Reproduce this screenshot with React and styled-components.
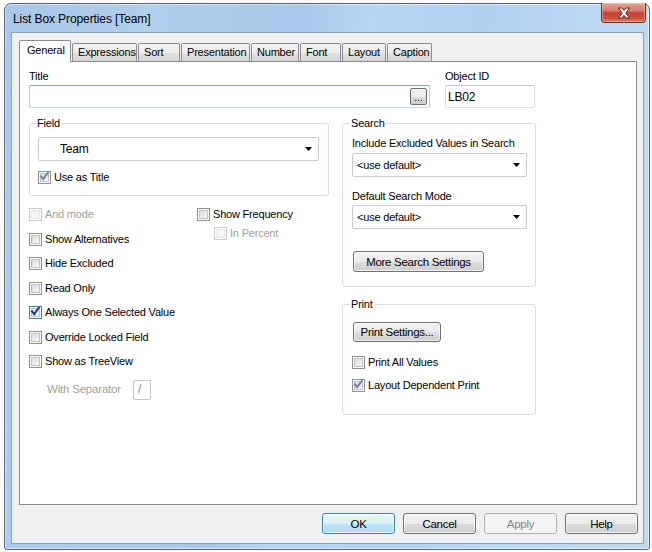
import React from "react";
import styled, { createGlobalStyle, css } from "styled-components";

const Global = createGlobalStyle`
  html, body { margin: 0; padding: 0; background: #ffffff; }
  body {
    font-family: "Liberation Sans", Arial, sans-serif;
    font-size: 11px;
    letter-spacing: -0.2px;
    color: #000;
  }
  * { box-sizing: border-box; }
  fieldset { min-width: 0; }
`;

const Screen = styled.div`
  width: 652px;
  height: 552px;
  padding: 3px 0 0 4px;
  background: #ffffff;
  overflow: hidden;
`;

const Window = styled.div`
  width: 646px;
  height: 547px;
  border: 1px solid #5a6470;
  border-radius: 7px 7px 3px 3px;
  background: linear-gradient(
    100deg,
    #a9c8e9 0%,
    #b0cfef 20%,
    #a8c9eb 40%,
    #b6d6f5 50%,
    #b0d0f0 65%,
    #bcd9f5 80%,
    #c2d8ee 100%
  );
  box-shadow: inset 0 0 0 1px rgba(255, 255, 255, 0.5);
  display: flex;
  flex-direction: column;
`;

const TitleBar = styled.div`
  height: 28px;
  display: flex;
  align-items: center;
  padding-left: 8px;
`;

const TitleText = styled.div`
  flex: 1;
  font-size: 12px;
  letter-spacing: -0.1px;
  color: #000;
  padding-top: 1px;
`;

const CloseButton = styled.div`
  align-self: flex-start;
  margin-top: -1px;
  margin-right: 3px;
  width: 45px;
  height: 20px;
  border: 1px solid #6b2a22;
  border-top: none;
  border-radius: 0 0 4px 4px;
  background: linear-gradient(
    to bottom,
    #e7a597 0%,
    #d67c6c 40%,
    #c4422f 52%,
    #c9533f 80%,
    #d9806b 100%
  );
  box-shadow: inset 0 0 0 1px rgba(255, 200, 190, 0.5);
  display: flex;
  align-items: center;
  justify-content: center;
`;

const Client = styled.div`
  flex: 1;
  margin: 0 5px 5px 6px;
  border: 1px solid #8aa1bd;
  background: #f0f0f0;
  padding: 7px 6px 0 7px;
  display: flex;
  flex-direction: column;
`;

const TabStrip = styled.div`
  height: 22px;
  display: flex;
  align-items: flex-end;
  gap: 1px;
`;

const Tab = styled.div`
  position: relative;
  width: ${(p) => p.$w}px;
  border: 1px solid #898c95;
  border-bottom: none;
  border-radius: 2px 2px 0 0;
  white-space: nowrap;
  ${(p) =>
    p.$active
      ? css`
          z-index: 1;
          height: 22px;
          background: #ffffff;
          padding: 3px 0 0 7px;
        `
      : css`
          height: 18px;
          margin-bottom: 1px;
          background: linear-gradient(to bottom, #f4f4f4 0%, #ededed 50%, #e2e2e2 51%, #d6d6d6 100%);
          padding: 2px 0 0 5px;
        `}
`;

const Panel = styled.div`
  margin-top: -1px;
  height: 444px;
  border: 1px solid #898c95;
  background: #ffffff;
  padding: 8px 0 0 9px;
  display: flex;
  flex-direction: column;
`;

const Row = styled.div`
  display: flex;
  gap: ${(p) => p.$gap}px;
  margin-top: ${(p) => p.$mt || 0}px;
`;

const Column = styled.div`
  width: ${(p) => p.$w}px;
  display: flex;
  flex-direction: column;
`;

const Label = styled.div`
  line-height: 13px;
  height: 13px;
  white-space: nowrap;
  color: ${(p) => (p.$disabled ? "#a0a0a0" : "#000")};
  margin-top: ${(p) => p.$mt || 0}px;
`;

const TextBox = styled.div`
  margin-top: 2px;
  height: 23px;
  background: #fff;
  border: 1px solid;
  border-color: ${(p) => (p.$focus ? "#7e9fc6 #b7cde4 #c7d9ec #b7cde4" : "#c9c9c9 #dadada #e0e0e0 #dadada")};
  border-radius: 2px;
  display: flex;
  align-items: center;
  justify-content: flex-end;
  padding: 0 2px;
  font-size: 12px;
`;

const IdText = styled.span`
  flex: 1;
`;

const SmallButton = styled.div`
  width: 17px;
  height: 17px;
  border: 1px solid #707070;
  border-radius: 2px;
  background: linear-gradient(to bottom, #f2f2f2 0%, #ebebeb 50%, #dddddd 51%, #cfcfcf 100%);
  font-size: 10px;
  line-height: 17px;
  text-align: center;
  letter-spacing: 0;
`;

const Group = styled.fieldset`
  margin: ${(p) => p.$mt || 0}px 0 0 0;
  border: 1px solid #d5dfe5;
  border-radius: 3px;
  padding: ${(p) => p.$pad};
  display: flex;
  flex-direction: column;
  align-items: flex-start;
`;

const Legend = styled.legend`
  padding: 0 1px;
  margin-left: -2px;
  line-height: 13px;
`;

const Combo = styled.div`
  width: 100%;
  height: ${(p) => p.$h || 24}px;
  margin-top: ${(p) => p.$mt || 0}px;
  border: 1px solid #cbcbcb;
  border-radius: 2px;
  background: #fff;
  display: flex;
  align-items: center;
  padding: 0 6px 0 ${(p) => p.$indent}px;
`;

const ComboText = styled.span`
  flex: 1;
  font-size: ${(p) => p.$fs || 11}px;
`;

const PushButton = styled.div`
  width: ${(p) => p.$w}px;
  height: ${(p) => p.$h || 21}px;
  margin-top: ${(p) => p.$mt || 0}px;
  margin-left: ${(p) => p.$ml || 0}px;
  border: 1px solid #707070;
  border-radius: 3px;
  background: linear-gradient(to bottom, #f2f2f2 0%, #ebebeb 50%, #dddddd 51%, #cfcfcf 100%);
  box-shadow: inset 0 0 0 1px rgba(255, 255, 255, 0.7);
  display: flex;
  align-items: center;
  justify-content: center;
  white-space: nowrap;
  font-size: 11.5px;
  letter-spacing: -0.3px;
  ${(p) =>
    p.$default &&
    css`
      border-color: #3c7fb1;
      background: linear-gradient(to bottom, #eaf6fd 0%, #d9f0fc 50%, #bee6fd 51%, #a7d9f5 100%);
      box-shadow: inset 0 0 0 1px rgba(255, 255, 255, 0.8);
    `}
  ${(p) =>
    p.$disabled &&
    css`
      border-color: #adb2b5;
      background: #f4f4f4;
      box-shadow: none;
      color: #838383;
    `}
`;

const CheckRow = styled.div`
  display: flex;
  align-items: center;
  height: 13px;
  margin-left: ${(p) => p.$ml || 0}px;
  margin-top: ${(p) => p.$mt || 0}px;
`;

const Box = styled.span`
  width: 13px;
  height: 13px;
  flex: none;
  border: 1px solid ${(p) => (p.$disabled ? "#c8c8c8" : p.$hot ? "#3c7fb1" : "#8e8f8f")};
  background: #fff;
  padding: 1px;
  display: flex;
  margin-right: 3px;
`;

const BoxInner = styled.span`
  flex: 1;
  border: 1px solid ${(p) => (p.$disabled ? "#e6e6e6" : "#c2c2c2")};
  background: ${(p) =>
    p.$disabled
      ? "#f4f4f4"
      : p.$hot
      ? "linear-gradient(135deg, #cbe3f5 0%, #eef6fc 100%)"
      : "linear-gradient(135deg, #dcdcdc 0%, #f6f6f6 100%)"};
  position: relative;
`;

const CheckSvg = styled.svg`
  position: absolute;
  left: -2px;
  top: -3px;
`;

const Checkbox = ({ label, checked, disabled, hot, dim, ml, mt }) => (
  <CheckRow $ml={ml} $mt={mt}>
    <Box $disabled={disabled} $hot={hot}>
      <BoxInner $disabled={disabled} $hot={hot}>
        {checked && (
          <CheckSvg width="11" height="11" viewBox="0 0 11 11">
            <path
              d="M2 5.5 L4.2 8.2 L8.8 1.8"
              fill="none"
              stroke={dim ? "#6f82ad" : "#21387a"}
              strokeWidth="2"
              strokeLinecap="square"
            />
          </CheckSvg>
        )}
      </BoxInner>
    </Box>
    <Label $disabled={disabled}>{label}</Label>
  </CheckRow>
);

const Arrow = () => (
  <svg width="7" height="4" viewBox="0 0 7 4">
    <polygon points="0,0 7,0 3.5,4" fill="#000" />
  </svg>
);

const OptionsGrid = styled.div`
  margin-top: 12px;
  display: grid;
  grid-template-columns: 168px 1fr;
`;

const OptionsList = styled.div`
  display: flex;
  flex-direction: column;
  gap: 11.5px;
`;

const SeparatorRow = styled.div`
  display: flex;
  align-items: center;
  height: 20px;
  padding-left: 18px;
`;

const SeparatorLabel = styled(Label)`
  width: 86px;
  font-size: 11.5px;
`;

const SeparatorBox = styled.div`
  width: 18px;
  height: 20px;
  border: 1px solid #c6c6c6;
  border-radius: 2px;
  color: #8a8a8a;
  font-size: 12px;
  padding-left: 4px;
  line-height: 17px;
`;

const ButtonRow = styled.div`
  margin-top: 8px;
  margin-right: -1px;
  display: flex;
  justify-content: flex-end;
  gap: 8px;
`;

const CloseX = () => (
  <svg width="14" height="12" viewBox="0 0 14 12">
    <path
      d="M1.5 1 H5 L7 3.6 L9 1 H12.5 L8.8 6 L12.5 11 H9 L7 8.4 L5 11 H1.5 L5.2 6 Z"
      fill="#ffffff"
      stroke="#5a2118"
      strokeWidth="1"
      strokeLinejoin="round"
    />
  </svg>
);

const tabs = [
  { name: "General", w: 52, active: true },
  { name: "Expressions", w: 65 },
  { name: "Sort", w: 42 },
  { name: "Presentation", w: 69 },
  { name: "Number", w: 48 },
  { name: "Font", w: 41 },
  { name: "Layout", w: 44 },
  { name: "Caption", w: 45 },
];

export default function App() {
  return (
    <>
      <Global />
      <Screen>
        <Window>
          <TitleBar>
            <TitleText>List Box Properties [Team]</TitleText>
            <CloseButton>
              <CloseX />
            </CloseButton>
          </TitleBar>
          <Client>
            <TabStrip>
              {tabs.map((t) => (
                <Tab key={t.name} $w={t.w} $active={t.active}>
                  {t.name}
                </Tab>
              ))}
            </TabStrip>
            <Panel>
              <Row $gap={15}>
                <Column $w={401}>
                  <Label>Title</Label>
                  <TextBox $focus>
                    <SmallButton>...</SmallButton>
                  </TextBox>
                </Column>
                <Column $w={90}>
                  <Label>Object ID</Label>
                  <TextBox>
                    <IdText>LB02</IdText>
                  </TextBox>
                </Column>
              </Row>

              <Row $gap={13} $mt={9}>
                <Column $w={300}>
                  <Group $pad="7px 9px 11px 8px">
                    <Legend>Field</Legend>
                    <Combo $indent={21}>
                      <ComboText $fs={12}>Team</ComboText>
                      <Arrow />
                    </Combo>
                    <Checkbox label="Use as Title" checked dim mt={10} />
                  </Group>

                  <OptionsGrid>
                    <OptionsList>
                      <Checkbox label="And mode" disabled />
                      <Checkbox label="Show Alternatives" />
                      <Checkbox label="Hide Excluded" />
                      <Checkbox label="Read Only" />
                      <Checkbox label="Always One Selected Value" checked hot />
                      <Checkbox label="Override Locked Field" />
                      <Checkbox label="Show as TreeView" />
                      <SeparatorRow>
                        <SeparatorLabel $disabled>With Separator</SeparatorLabel>
                        <SeparatorBox>/</SeparatorBox>
                      </SeparatorRow>
                    </OptionsList>
                    <div>
                      <Checkbox label="Show Frequency" />
                      <Checkbox label="In Percent" disabled ml={17} mt={6} />
                    </div>
                  </OptionsGrid>
                </Column>

                <Column $w={194}>
                  <Group $pad="7px 8px 14px 9px">
                    <Legend>Search</Legend>
                    <Label>Include Excluded Values in Search</Label>
                    <Combo $indent={4} $mt={3}>
                      <ComboText>&lt;use default&gt;</ComboText>
                      <Arrow />
                    </Combo>
                    <Label $mt={13}>Default Search Mode</Label>
                    <Combo $indent={4} $mt={2}>
                      <ComboText>&lt;use default&gt;</ComboText>
                      <Arrow />
                    </Combo>
                    <PushButton $w={131} $mt={22} $ml={1}>
                      More Search Settings
                    </PushButton>
                  </Group>

                  <Group $pad="11px 8px 22px 9px" $mt={11}>
                    <Legend>Print</Legend>
                    <PushButton $w={88} $h={20} $ml={1}>
                      Print Settings...
                    </PushButton>
                    <Checkbox label="Print All Values" mt={14} />
                    <Checkbox label="Layout Dependent Print" checked dim mt={10} />
                  </Group>
                </Column>
              </Row>
            </Panel>
            <ButtonRow>
              <PushButton $w={73} $default>OK</PushButton>
              <PushButton $w={73}>Cancel</PushButton>
              <PushButton $w={73} $disabled>Apply</PushButton>
              <PushButton $w={73}>Help</PushButton>
            </ButtonRow>
          </Client>
        </Window>
      </Screen>
    </>
  );
}
